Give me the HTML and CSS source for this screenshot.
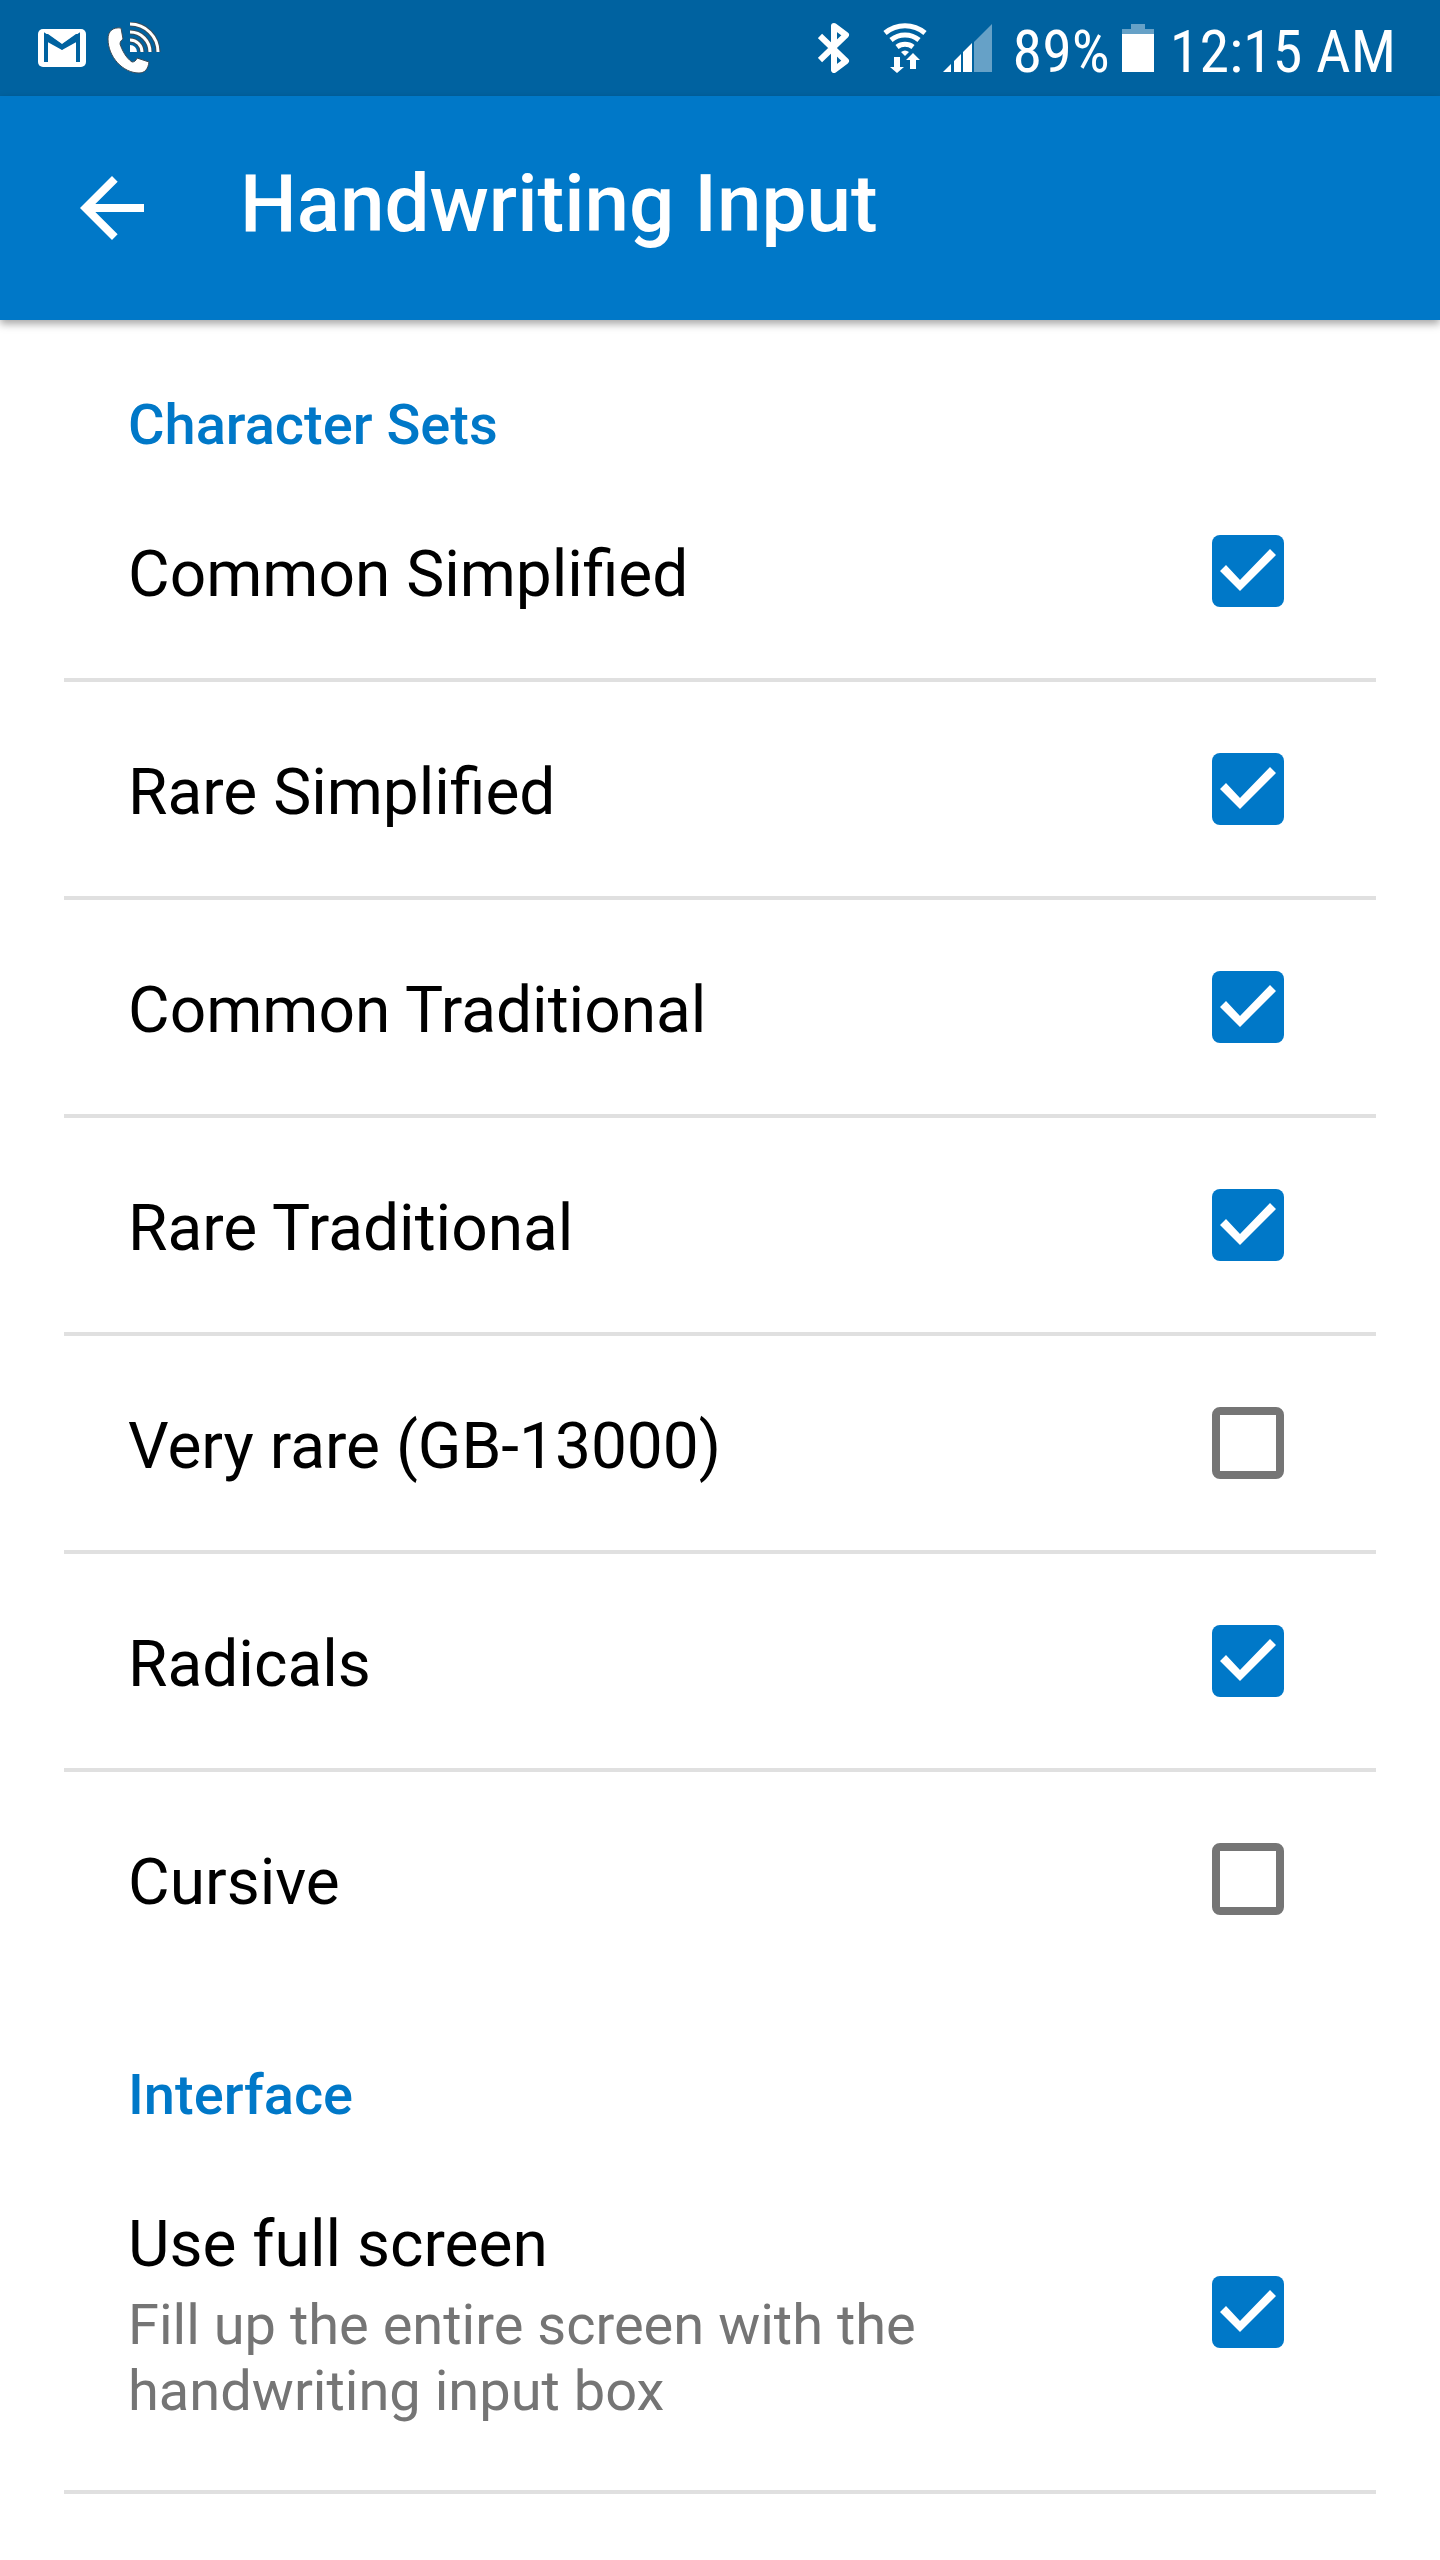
FILE: index.html
```html
<!DOCTYPE html>
<html lang="en">
<head>
	<meta charset="utf-8">
	<title>Handwriting Input</title>
	<link rel="stylesheet" href="styles.css">
</head>
<body>

<div class="statusbar">
	<svg class="gmail" width="48" height="38" viewBox="0 0 48 38" aria-hidden="true">
		<rect width="48" height="38" rx="5" fill="#fff"/>
		<path d="M8 33V7l16 11L40 7v26" fill="none" stroke="#0062a0" stroke-width="4"/>
		<path d="M6 5h4l14 10L38 5h4v6L24 21 6 11z" fill="#0062a0"/>
	</svg>
	<svg class="call" width="54" height="52" viewBox="0 0 54 52" aria-hidden="true">
		<path d="M14 6C6 5 1 9 1 17c0 18 15 34 31 34 6 0 9-4 10-11l-12-4c-1 3-3 4-5 4-6-4-10-12-12-18 0-3 2-4 3-5z" fill="#fff" stroke="#3d4b55"/>
		<g fill="none" stroke="#3d4b55" stroke-width="5">
			<path d="M23 18a12 12 0 0 1 12 12M23 10a20 20 0 0 1 20 20M23 2a28 28 0 0 1 28 28"/>
		</g>
		<g fill="none" stroke="#fff" stroke-width="3">
			<path d="M23 18a12 12 0 0 1 12 12M23 10a20 20 0 0 1 20 20M23 2a28 28 0 0 1 28 28"/>
		</g>
		<path d="M23 23a7 7 0 0 1 7 7h-7z" fill="#fff"/>
	</svg>
	<div class="status-right">
		<svg width="32" height="50" viewBox="0 0 32 50" aria-hidden="true">
			<path d="M2 13l26 25-12 9V3l12 9L2 37" fill="none" stroke="#fff" stroke-width="6" stroke-linejoin="round"/>
		</svg>
		<svg class="wifi" width="44" height="50" viewBox="0 0 44 50" aria-hidden="true">
			<g fill="none" stroke="#fff" stroke-width="5">
				<path d="M2 10a31 31 0 0 1 40 0M8 17a22 22 0 0 1 28 0M14 24a13 13 0 0 1 16 0"/>
			</g>
			<path d="M18 29q4-3 8 0l-4 4z" fill="#fff"/>
			<path d="M11 34h6v10h4l-7 6-7-6h4zM27 46V37h-4l7-7 7 7h-4v9z" fill="#fff"/>
		</svg>
		<svg class="signal" width="50" height="48" viewBox="0 0 50 48" aria-hidden="true">
			<path d="M0 48l8-8v8zM11 48V37l7-7v18zM20 48V28l9-9v29z" fill="#fff"/>
			<path d="M31 48V18L49 0v48z" fill="#66a1c7"/>
		</svg>
		<span class="status-text">89%</span>
		<svg class="battery" width="32" height="48" viewBox="0 0 32 48" aria-hidden="true">
			<path d="M0 5h9V0h14v5h9v5H0z" fill="#66a1c7"/>
			<path d="M0 10h32v38H0z" fill="#fff"/>
		</svg>
		<span class="status-text">12:15 AM</span>
	</div>
</div>

<header class="appbar">
	<button class="back" type="button" aria-label="Back">
		<svg width="96" height="96" viewBox="0 0 24 24" aria-hidden="true">
			<path d="M20 11H7.83l5.59-5.59L12 4l-8 8 8 8 1.41-1.41L7.83 13H20z" fill="#fff"/>
		</svg>
	</button>
	<h1 class="title">Handwriting Input</h1>
</header>

<main>
	<section class="group">
		<h2 class="group-title">Character Sets</h2>
		<label class="row"><span class="row-text">Common Simplified</span><input class="check" type="checkbox" checked></label>
		<label class="row"><span class="row-text">Rare Simplified</span><input class="check" type="checkbox" checked></label>
		<label class="row"><span class="row-text">Common Traditional</span><input class="check" type="checkbox" checked></label>
		<label class="row"><span class="row-text">Rare Traditional</span><input class="check" type="checkbox" checked></label>
		<label class="row"><span class="row-text">Very rare (GB-13000)</span><input class="check" type="checkbox"></label>
		<label class="row"><span class="row-text">Radicals</span><input class="check" type="checkbox" checked></label>
		<label class="row row-last"><span class="row-text">Cursive</span><input class="check" type="checkbox"></label>
	</section>

	<section class="group">
		<h2 class="group-title">Interface</h2>
		<label class="row">
			<span class="row-text">Use full screen
				<span class="summary">Fill up the entire screen with the handwriting input box</span>
			</span>
			<input class="check" type="checkbox" checked>
		</label>
	</section>
</main>

</body>
</html>
```

FILE: styles.css
```css
* { box-sizing: border-box; }

body {
	margin: 0;
	background: #fff;
	color: #000;
	font-family: Roboto, "Liberation Sans", sans-serif;
}

svg { display: block; flex: none; }

/* status bar */
.statusbar {
	display: flex;
	align-items: center;
	height: 96px;
	padding: 0 44px 0 38px;
	background: #0062a0;
	color: #fff;
}
.call { margin-left: 21px; }
.status-right {
	display: flex;
	align-items: center;
	margin-left: auto;
}
.wifi { margin-left: 33px; }
.signal { margin: 0 20px 0 16px; }
.battery { margin: 0 16px 0 12px; }
.status-text {
	padding-top: 8px;
	font-family: "Roboto Condensed", Roboto, sans-serif;
	font-size: 60px;
	line-height: 70px;
	white-space: nowrap;
}

/* app bar */
.appbar {
	position: relative;
	display: flex;
	align-items: center;
	gap: 80px;
	height: 224px;
	padding: 0 64px;
	background: #0078c8;
	color: #fff;
	box-shadow: 0 4px 8px rgba(0, 0, 0, 0.35);
}
.back {
	padding: 0;
	border: 0;
	background: none;
	cursor: pointer;
}
.title {
	margin: 0;
	padding-bottom: 8px;
	font-size: 80px;
	font-weight: 500;
	line-height: 94px;
}

/* settings list */
.group { padding: 0 64px; }
.group-title {
	margin: 0;
	padding: 72px 64px 6px;
	color: #0078c8;
	font-size: 56px;
	font-weight: 500;
	line-height: 66px;
}
.row {
	display: flex;
	align-items: center;
	justify-content: space-between;
	gap: 64px;
	padding: 66px 92px 66px 64px;
	border-bottom: 4px solid #e0e0e0;
	cursor: pointer;
}
.row-last { border-bottom-color: transparent; }
.row-text {
	padding-top: 8px;
	font-size: 64px;
	line-height: 74px;
}
.summary {
	display: block;
	margin-top: 10px;
	color: #757575;
	font-size: 56px;
	line-height: 66px;
}

.check {
	flex: none;
	width: 72px;
	height: 72px;
	margin: 0;
	appearance: none;
	border: 8px solid #757575;
	border-radius: 8px;
}
.check:checked {
	border: 0;
	background: #0078c8;
}
.check:checked::before {
	content: "";
	display: block;
	height: 72px;
	background: #fff;
	clip-path: polygon(28px 56px, 8px 36px, 14px 30px, 28px 45px, 58px 14px, 64px 20px);
}
```
